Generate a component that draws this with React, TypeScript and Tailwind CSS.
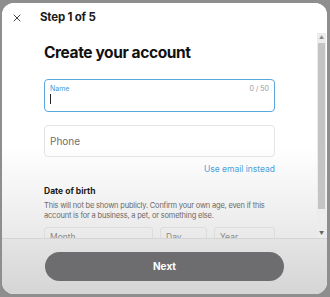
import { X } from 'lucide-react';

function Field({ label, className }: { label: string; className: string }) {
    return (
        <div className={`h-[30px] rounded-[3px] border border-[#dcdcdc] px-[5px] pt-[4px] text-[8.5px] leading-[10px] text-[#8a8a8a] ${className}`}>
            {label}
        </div>
    );
}

export default function App() {
    return (
        <div className="w-[330px] h-[297px] bg-[#8e8e8e] pl-[2px] pr-[3px] pt-[3px] pb-[3px] overflow-hidden font-['Inter',sans-serif]">
            <div className="h-full flex flex-col rounded-[12px] overflow-hidden bg-white">
                <div className="flex items-center h-[30px] shrink-0 bg-white">
                    <X className="ml-[9px] w-[12px] h-[12px] text-[#444]" strokeWidth={2} />
                    <span className="ml-[17px] text-[11.5px] font-bold text-[#1a1a1a] tracking-[-0.2px]">Step 1 of 5</span>
                </div>
                <div className="flex flex-1 min-h-0 bg-gradient-to-b from-white from-55% to-[#e9e9e9]">
                    <div className="flex-1 min-w-0 overflow-hidden px-[42px] pt-[9px]">
                        <h1 className="text-[15.5px] leading-[22px] font-bold text-[#111] tracking-[-0.4px]">Create your account</h1>
                        <div className="mt-[15px] h-[33px] rounded-[4px] border-[1.5px] border-[#5aa7de] px-[5px] pt-[4px]">
                            <div className="flex justify-between text-[7px] leading-[9px]">
                                <span className="text-[#4a9ad6]">Name</span>
                                <span className="text-[#9a9a9a]">0 / 50</span>
                            </div>
                            <div className="mt-[1px] w-[1px] h-[10px] bg-[#222]" />
                        </div>
                        <div className="mt-[13px] h-[32px] rounded-[4px] border border-[#e4e4e4] px-[5px] flex items-center">
                            <span className="text-[10px] text-[#6e6e6e]">Phone</span>
                        </div>
                        <div className="mt-[6px] text-right text-[8.5px] leading-[12px] text-[#4aa0dc]">Use email instead</div>
                        <div className="mt-[11px] text-[8.5px] leading-[11px] font-bold text-[#1a1a1a]">Date of birth</div>
                        <p className="mt-[4px] text-[7.5px] leading-[10px] tracking-[-0.2px] text-[#6a6a6a]">
                            This will not be shown publicly. Confirm your own age, even if this account is for a business, a pet, or something else.
                        </p>
                        <div className="mt-[6px] flex gap-[7px]">
                            <Field label="Month" className="w-[109px]" />
                            <Field label="Day" className="w-[47px]" />
                            <Field label="Year" className="flex-1" />
                        </div>
                    </div>
                    <div className="w-[9px] mr-[1px] shrink-0 flex flex-col bg-[#ececec]">
                        <div className="h-[9px] flex items-center justify-center text-[5px] text-[#888]">▲</div>
                        <div className="mt-[1px] h-[166px] bg-[#c4c4c4] mx-[1px]" />
                        <div className="flex-1" />
                        <div className="h-[9px] flex items-center justify-center text-[5px] text-[#666]">▼</div>
                    </div>
                </div>
                <div className="h-[56px] shrink-0 border-t border-[#d4d4d4] bg-gradient-to-b from-[#e4e4e4] to-[#d5d5d5] flex items-center px-[43px]">
                    <button className="w-full h-[29px] rounded-full bg-[#6d6d6f] text-white text-[10px] font-bold">Next</button>
                </div>
            </div>
        </div>
    );
}
